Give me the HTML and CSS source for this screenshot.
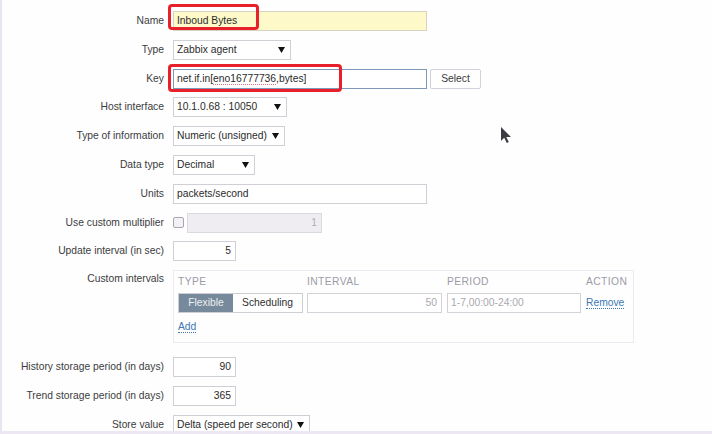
FILE: index.html
```html
<!DOCTYPE html>
<html>
<head>
<meta charset="utf-8">
<link rel="stylesheet" href="styles.css">
</head>
<body>
<div class="page">
  <div class="form">
    <div class="lbl">Name</div>
    <div class="ctl"><div class="inp w254 yellow">Inboud Bytes</div></div>

    <div class="lbl">Type</div>
    <div class="ctl"><div class="sel w118"><span>Zabbix agent</span><svg class="arr" width="7" height="6" viewBox="0 0 7 6"><path d="M0 0h7L3.5 6z"/></svg></div></div>

    <div class="lbl">Key</div>
    <div class="ctl row"><div class="inp w254 focus">net.if.in[<span class="spell">eno16777736</span>,bytes]</div><div class="btn">Select</div></div>

    <div class="lbl">Host interface</div>
    <div class="ctl"><div class="sel w114"><span>10.1.0.68 : 10050</span><svg class="arr" width="7" height="6" viewBox="0 0 7 6"><path d="M0 0h7L3.5 6z"/></svg></div></div>

    <div class="lbl">Type of information</div>
    <div class="ctl"><div class="sel w112"><span>Numeric (unsigned)</span><svg class="arr" width="7" height="6" viewBox="0 0 7 6"><path d="M0 0h7L3.5 6z"/></svg></div></div>

    <div class="lbl">Data type</div>
    <div class="ctl"><div class="sel w82"><span>Decimal</span><svg class="arr" width="7" height="6" viewBox="0 0 7 6"><path d="M0 0h7L3.5 6z"/></svg></div></div>

    <div class="lbl">Units</div>
    <div class="ctl"><div class="inp w254">packets/second</div></div>

    <div class="lbl">Use custom multiplier</div>
    <div class="ctl row"><div class="chk"></div><div class="inp w135 disabled num">1</div></div>

    <div class="lbl">Update interval (in sec)</div>
    <div class="ctl"><div class="inp w63 num">5</div></div>

    <div class="lbl top">Custom intervals</div>
    <div class="ctl">
      <div class="intervals">
        <div class="hd">Type</div>
        <div class="hd">Interval</div>
        <div class="hd">Period</div>
        <div class="hd">Action</div>
        <div class="seg"><div class="seg-on">Flexible</div><div class="seg-off">Scheduling</div></div>
        <div class="inp w135 num grey">50</div>
        <div class="inp w134 grey">1-7,00:00-24:00</div>
        <div class="link-cell"><span class="link">Remove</span></div>
        <div class="add"><span class="link">Add</span></div>
      </div>
    </div>

    <div class="lbl">History storage period (in days)</div>
    <div class="ctl"><div class="inp w63 num">90</div></div>

    <div class="lbl">Trend storage period (in days)</div>
    <div class="ctl"><div class="inp w63 num">365</div></div>

    <div class="lbl">Store value</div>
    <div class="ctl"><div class="sel w137"><span>Delta (speed per second)</span><svg class="arr" width="7" height="6" viewBox="0 0 7 6"><path d="M0 0h7L3.5 6z"/></svg></div></div>
  </div>

  <div class="mark mark-name"></div>
  <div class="mark mark-key"></div>
  <svg class="cursor" width="12" height="18" viewBox="0 0 12 18"><path d="M1 1v14l3.2-3.2 2.6 5.2 2-1-2.5-5H11z" fill="#3d3b40"/></svg>
</div>
</body>
</html>
```
FILE: styles.css
```css
html, body {
  margin: 0;
  padding: 0;
}
body {
  width: 712px;
  height: 434px;
  box-sizing: border-box;
  overflow: hidden;
  background: #fefeff;
  border-left: 2px solid #e9e4f1;
  border-bottom: 3px solid #ece7f3;
  font-family: "Liberation Sans", Arial, sans-serif;
  font-size: 10.3px;
  color: #333;
}
.page {
  position: relative;
  height: 100%;
}
.form {
  display: grid;
  grid-template-columns: 162px auto;
  column-gap: 9px;
  row-gap: 8.8px;
  align-items: center;
  padding-top: 11px;
}
.lbl {
  text-align: right;
  color: #3c3c3c;
  white-space: nowrap;
  line-height: 12px;
}
.lbl.top {
  align-self: start;
  padding-top: 3px;
}
.ctl {
  display: flex;
  align-items: center;
}
.row {
  gap: 3px;
}
.inp, .sel, .btn {
  height: 20px;
  box-sizing: border-box;
  border: 1px solid #d0cfd6;
  background: #fff;
  line-height: 18px;
  padding: 0 3px;
  color: #2b2b2b;
  white-space: nowrap;
  overflow: hidden;
}
.yellow { background: #fdf9c9; border-color: #d6d3c4; }
.focus { border-color: #7d98b8; }
.disabled { background: #efedf1; border-color: #dcdae0; color: #b0aeb4; }
.grey { color: #aaa8ae; border-color: #d4d2d8; }
.num { text-align: right; padding-right: 4px; }
.spell {
  text-decoration: underline dotted #e07a78;
  text-decoration-thickness: 1px;
  text-underline-offset: 2px;
}
.w254 { width: 254px; }
.w135 { width: 135px; }
.w134 { width: 134px; }
.w137 { width: 137px; }
.w118 { width: 118px; }
.w114 { width: 114px; }
.w112 { width: 112px; }
.w82 { width: 82px; }
.w63 { width: 63px; }
.sel {
  display: flex;
  align-items: center;
  justify-content: space-between;
  padding-right: 5px;
}
.arr { fill: #111; flex: none; }
.btn {
  width: 51px;
  text-align: center;
  border-color: #d2d0da;
  border-radius: 2px;
  color: #3a3a3a;
}
.chk {
  width: 11px;
  height: 11px;
  box-sizing: border-box;
  border: 1px solid #a9a7ae;
  border-radius: 2px;
  background: #f3f1f5;
}
.intervals {
  width: 461px;
  height: 73px;
  box-sizing: border-box;
  border: 1px solid #ece9f0;
  padding: 5px 4px 0 4px;
  margin-bottom: 5px;
  display: grid;
  grid-template-columns: 125px 136px 135px auto;
  grid-template-rows: 12px 20px 12px;
  column-gap: 4px;
  row-gap: 5px;
  align-items: center;
}
.hd {
  text-transform: uppercase;
  color: #9d9ba3;
  letter-spacing: 0.4px;
  line-height: 12px;
}
.seg {
  display: flex;
  height: 20px;
  box-sizing: border-box;
  border: 1px solid #cfcdd4;
  width: 125px;
}
.seg-on {
  width: 54px;
  background: #768a9b;
  color: #eef0f3;
  text-align: center;
  line-height: 18px;
}
.seg-off {
  flex: 1;
  background: #fff;
  color: #2f2f2f;
  text-align: center;
  line-height: 18px;
}
.link {
  color: #3b78b4;
  border-bottom: 1px dotted #3b78b4;
  line-height: 12px;
}
.add {
  grid-column: 1 / span 4;
  margin-top: 5px;
}
.mark {
  position: absolute;
  border: 3px solid #e8202a;
  border-radius: 4px;
  box-sizing: border-box;
}
.mark-name {
  left: 166px;
  top: 4px;
  width: 91px;
  height: 26px;
}
.mark-key {
  left: 166px;
  top: 64px;
  width: 174px;
  height: 28px;
}
.cursor {
  position: absolute;
  left: 498px;
  top: 126px;
}
```
